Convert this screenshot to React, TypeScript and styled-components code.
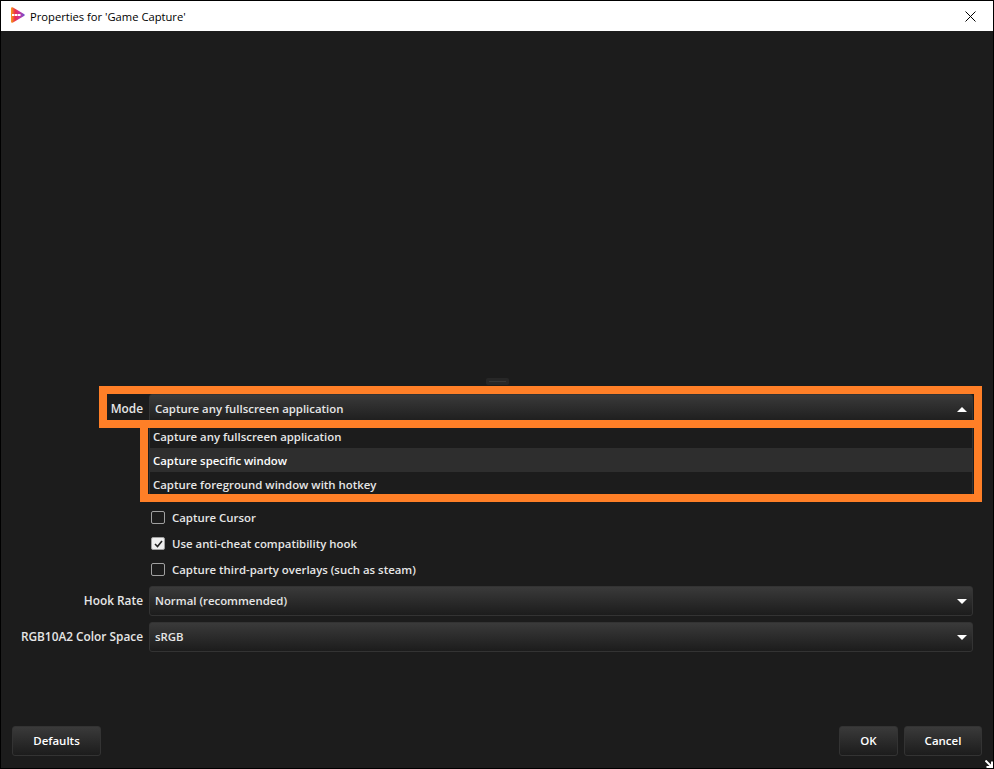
import { FC } from "react";
import styled, { createGlobalStyle } from "styled-components";

const GlobalStyle = createGlobalStyle`
  html, body {
    margin: 0;
    padding: 0;
    background: #1c1c1c;
  }
`;

const Window = styled.div`
  width: 994px;
  height: 769px;
  box-sizing: border-box;
  border: 1px solid #000;
  display: flex;
  flex-direction: column;
  position: relative;
  overflow: hidden;
  background: #1c1c1c;
  font-family: "Open Sans", "Liberation Sans", sans-serif;
  font-size: 11.4px;
  font-weight: 600;
  color: #e6e6e6;
`;

const TitleBar = styled.div`
  height: 30px;
  flex: none;
  background: #fff;
  display: flex;
  align-items: center;
  padding: 0 0 0 9px;
  gap: 5px;
`;

const TitleText = styled.span`
  flex: 1;
  font-family: "Open Sans", sans-serif;
  font-weight: 400;
  font-size: 11.2px;
  color: #000;
`;

const CloseButton = styled.div`
  width: 46px;
  height: 30px;
  display: flex;
  align-items: center;
  justify-content: center;
`;

const PreviewArea = styled.div`
  flex: none;
  height: 347px;
`;

const Splitter = styled.div`
  width: 23px;
  height: 7px;
  box-sizing: border-box;
  margin: 0 auto;
  background: #272727;
  border-radius: 2px;
  display: flex;
  align-items: center;
  justify-content: center;

  &::after {
    content: "";
    width: 17px;
    height: 1px;
    background: #383838;
  }
`;

const Form = styled.div`
  flex: none;
  display: grid;
  grid-template-columns: 142px 824px;
  column-gap: 6px;
  margin-top: 9px;
`;

const Label = styled.div`
  display: flex;
  align-items: center;
  justify-content: flex-end;
  box-sizing: border-box;
  height: 30px;
  padding-bottom: 2px;
  margin-bottom: 6px;
  font-size: 11.85px;
`;

const Field = styled.div`
  min-width: 0;
  position: relative;
`;

const Combo = styled.div`
  height: 30px;
  box-sizing: border-box;
  margin-bottom: 6px;
  padding: 0 5px;
  display: flex;
  align-items: center;
  justify-content: space-between;
  border: 1px solid #333;
  border-radius: 3px;
  background: linear-gradient(#3a3a3a, #1c1c1c);
`;

const ComboText = styled.span`
  margin-bottom: 2px;
`;

const Arrow = styled.div<{ $up?: boolean }>`
  width: 0;
  height: 0;
  border-left: 5px solid transparent;
  border-right: 5px solid transparent;
  border-top: ${({ $up }) => ($up ? "0" : "5px solid #fff")};
  border-bottom: ${({ $up }) => ($up ? "5px solid #fff" : "0")};
`;

const Popup = styled.div`
  margin: -7px 0 0;
  box-sizing: border-box;
  border: 1px solid #333;
  background: #1c1c1c;
  height: 74px;
`;

const PopupItem = styled.div<{ $hover?: boolean }>`
  height: 24px;
  padding-left: 3px;
  display: flex;
  align-items: center;
  background: ${({ $hover }) => ($hover ? "#2e2e2e" : "transparent")};
  color: ${({ $hover }) => ($hover ? "#fff" : "#e6e6e6")};
`;

const CheckList = styled.div`
  display: flex;
  flex-direction: column;
  padding: 14px 0 10px 2px;
  gap: 13px;
`;

const CheckRow = styled.div`
  display: flex;
  align-items: center;
  gap: 7px;
  height: 13px;
`;

const CheckBox = styled.div<{ $checked?: boolean }>`
  width: 14px;
  height: 13px;
  box-sizing: border-box;
  border: 1.5px solid #a0a0a0;
  border-radius: 2px;
  background: ${({ $checked }) => ($checked ? "#f0f0f0" : "transparent")};
  display: flex;
  align-items: center;
  justify-content: center;
`;

const Highlight = styled.div`
  position: absolute;
  border: 8px solid #ff7f27;
  box-sizing: border-box;
  pointer-events: none;
`;

const ModeHighlight = styled(Highlight)`
  left: 98px;
  top: 385px;
  width: 883px;
  height: 42px;
`;

const ListHighlight = styled(Highlight)`
  left: 139px;
  top: 419px;
  width: 842px;
  height: 82px;
`;

const Footer = styled.div`
  margin-top: auto;
  display: flex;
  align-items: center;
  gap: 6px;
  padding: 0 11px 12px;
`;

const Button = styled.div<{ $w: number }>`
  width: ${({ $w }) => $w}px;
  height: 30px;
  box-sizing: border-box;
  padding-bottom: 2px;
  display: flex;
  align-items: center;
  justify-content: center;
  border: 1px solid #333;
  border-radius: 3px;
  background: linear-gradient(#3a3a3a, #1c1c1c);
  color: #fff;
  font-size: 11.5px;
`;

const FooterGap = styled.div`
  flex: 1;
`;

const Grip = styled.svg`
  position: absolute;
  right: 0;
  bottom: 0;
`;

const LogoSvg = styled.svg`
  flex: none;
  margin-bottom: 2px;
`;

const Logo: FC = () => (
  <LogoSvg width="15" height="16" viewBox="0 0 15 16">
    <defs>
      <linearGradient id="logoFill" x1="0" x2="1" y1="0" y2="0">
        <stop offset="0" stopColor="#f9a01b" />
        <stop offset="0.3" stopColor="#ec2f4b" />
        <stop offset="0.6" stopColor="#c9349e" />
        <stop offset="1" stopColor="#6a52d0" />
      </linearGradient>
    </defs>
    <path d="M1 1.2 C1 .2 2 0 3 .6 L14 7 C15 7.6 15 8.4 14 9 L3 15.4 C2 16 1 15.8 1 14.8 Z" fill="url(#logoFill)" />
    <rect x="2" y="7" width="2.5" height="2" fill="#fff" />
    <rect x="5" y="7" width="2.5" height="2" fill="#fff" />
    <rect x="8" y="7" width="2.5" height="2" fill="#fff" />
  </LogoSvg>
);

const App: FC = () => (
  <>
    <GlobalStyle />
    <Window>
      <TitleBar>
        <Logo />
        <TitleText>Properties for 'Game Capture'</TitleText>
        <CloseButton>
          <svg width="11" height="11" viewBox="0 0 11 11">
            <path d="M0.5 0.5 L10.5 10.5 M10.5 0.5 L0.5 10.5" stroke="#000" strokeWidth="1" />
          </svg>
        </CloseButton>
      </TitleBar>

      <PreviewArea />
      <Splitter />

      <Form>
        <Label>Mode</Label>
        <Field>
          <Combo>
            <ComboText>Capture any fullscreen application</ComboText>
            <Arrow $up />
          </Combo>
        </Field>

        <div />
        <Field>
          <Popup>
            <PopupItem>Capture any fullscreen application</PopupItem>
            <PopupItem $hover>Capture specific window</PopupItem>
            <PopupItem>Capture foreground window with hotkey</PopupItem>
          </Popup>
          <CheckList>
            <CheckRow>
              <CheckBox />
              Capture Cursor
            </CheckRow>
            <CheckRow>
              <CheckBox $checked>
                <svg width="9" height="8" viewBox="0 0 9 8">
                  <path d="M1 4 L3.5 6.5 L8 1" fill="none" stroke="#222" strokeWidth="1.6" />
                </svg>
              </CheckBox>
              Use anti-cheat compatibility hook
            </CheckRow>
            <CheckRow>
              <CheckBox />
              Capture third-party overlays (such as steam)
            </CheckRow>
          </CheckList>
        </Field>

        <Label>Hook Rate</Label>
        <Field>
          <Combo>
            <ComboText>Normal (recommended)</ComboText>
            <Arrow />
          </Combo>
        </Field>

        <Label>RGB10A2 Color Space</Label>
        <Field>
          <Combo>
            <ComboText>sRGB</ComboText>
            <Arrow />
          </Combo>
        </Field>
      </Form>

      <Footer>
        <Button $w={89}>Defaults</Button>
        <FooterGap />
        <Button $w={59}>OK</Button>
        <Button $w={78}>Cancel</Button>
      </Footer>

      <ModeHighlight />
      <ListHighlight />

      <Grip width="8" height="8" viewBox="0 0 8 8">
        <path d="M0.5 0.5 L6 6 M7 1.5 V7 H1.5" fill="none" stroke="#fff" strokeWidth="2" />
      </Grip>
    </Window>
  </>
);

export default App;
